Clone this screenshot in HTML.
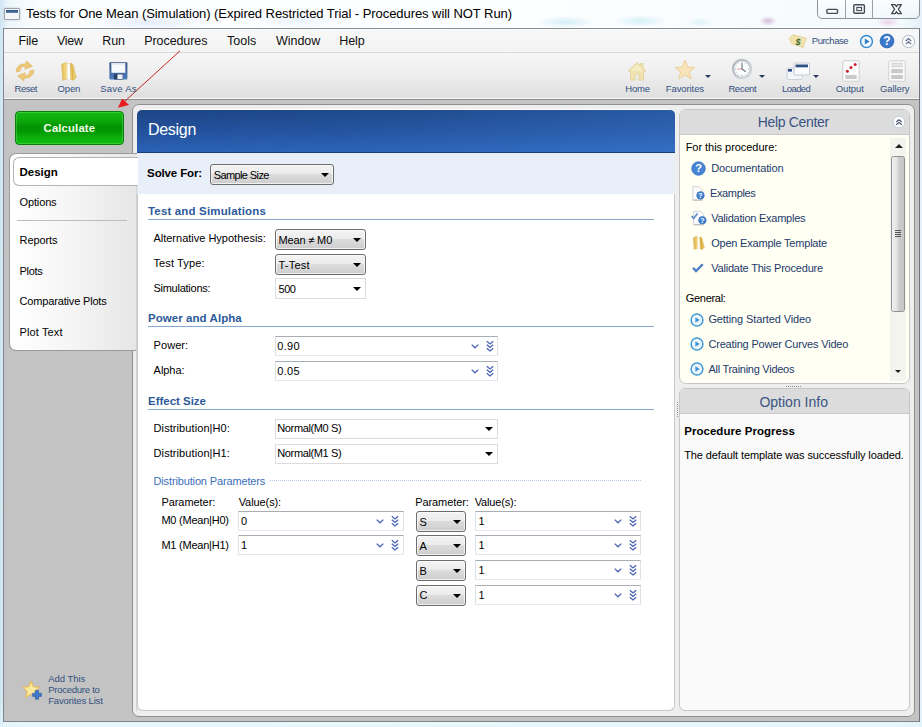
<!DOCTYPE html>
<html><head><meta charset="utf-8"><title>Tests for One Mean (Simulation)</title>
<style>
*{box-sizing:border-box;margin:0;padding:0}
html,body{width:922px;height:727px;overflow:hidden;background:#fff}
body{font-family:"Liberation Sans","DejaVu Sans",sans-serif;font-size:11px;color:#000;position:relative}
#win{position:absolute;left:0;top:0;width:922px;height:727px;overflow:hidden;
 background:
  radial-gradient(ellipse 9px 5px at 768px 21px,rgba(170,110,170,.45),rgba(255,255,255,0) 100%),
  radial-gradient(ellipse 12px 5px at 888px 22px,rgba(225,150,200,.4),rgba(255,255,255,0) 100%),
  radial-gradient(ellipse 30px 6px at 566px 22px,rgba(150,215,235,.4),rgba(255,255,255,0) 100%),
  radial-gradient(ellipse 28px 6px at 640px 21px,rgba(150,220,235,.38),rgba(255,255,255,0) 100%),
  radial-gradient(ellipse 14px 5px at 700px 22px,rgba(160,220,235,.3),rgba(255,255,255,0) 100%),
  radial-gradient(ellipse 60px 9px at 150px 22px,rgba(190,205,240,.35),rgba(255,255,255,0) 100%),
  radial-gradient(ellipse 50px 8px at 300px 20px,rgba(200,225,245,.35),rgba(255,255,255,0) 100%),
  linear-gradient(180deg,rgba(255,255,255,0) 0,rgba(255,255,255,0) 700px,rgba(225,245,250,.8) 727px),
  linear-gradient(90deg,#cfe4f2 0,#eef6fb 8px,#fbfdff 40px,#fdfeff 420px,#fbfdff 640px,#f4fafd 900px,#e4f1f8 922px);}
#win>*{position:absolute}
.t{position:absolute;white-space:nowrap}
svg{position:absolute;overflow:visible}
.bx{position:absolute}
/* combos */
.cb{position:absolute;border:1px solid #6c6c6c;border-radius:3px;background:linear-gradient(#f4f4f4 0,#ebebeb 45%,#dcdcdc 50%,#cdcdcd 100%);box-shadow:inset 0 0 0 1px rgba(255,255,255,.7)}
.fl{position:absolute;border:1px solid #dcdcdc;background:#fff}
.in{position:absolute;border:1px solid #dde1e8;border-top-color:#a9acb3;border-bottom-color:#e3e8ee;background:#fff}
.ar{position:absolute;width:0;height:0;border-left:4px solid transparent;border-right:4px solid transparent;border-top:4px solid #000}
.sec{position:absolute;height:1px;background:#85a9cf;left:148px;width:506px}
</style></head><body>
<div id="win">
<!-- client area -->
<div class="bx" style="left:3px;top:28px;width:917px;height:694px;background:#c3c3c3;border:1px solid #7d838a;border-top-color:#8a9096;border-bottom-color:#7d848a;border-right-color:#6f757c"></div>
<div class="bx" style="left:4px;top:29px;width:915px;height:23px;background:linear-gradient(#f8f8f8,#f4f4f4)"></div>
<div class="bx" style="left:4px;top:52px;width:915px;height:1px;background:#d9d9d9"></div>
<div class="bx" style="left:4px;top:53px;width:915px;height:45px;background:linear-gradient(#f6f6f6 0,#efefef 45%,#dfdfdf 100%)"></div>
<div class="bx" style="left:4px;top:98px;width:915px;height:1px;background:#fafafa"></div>
<div class="bx" style="left:4px;top:99px;width:915px;height:1px;background:#8a8a8a"></div>
<div class="bx" style="left:4px;top:100px;width:915px;height:6px;background:#c4c4c4"></div>

<!-- title icon -->
<div class="bx" style="left:4px;top:8px;width:16px;height:12px;background:#f4f6f8;border:1px solid #9aa3ad;border-radius:1px;box-shadow:0 0 2px rgba(120,140,170,.5)"></div>
<div class="bx" style="left:6px;top:10px;width:12px;height:3px;background:linear-gradient(#2d4f80,#5d86b5)"></div>
<!-- caption buttons -->
<div class="bx" style="left:817px;top:-4px;width:103px;height:23px;border:1px solid #8a929b;border-radius:0 0 5px 5px;background:linear-gradient(rgba(255,255,255,.7),rgba(240,246,250,.5))"></div>
<div class="bx" style="left:845px;top:0;width:1px;height:18px;background:#9aa2ab"></div>
<div class="bx" style="left:872px;top:0;width:1px;height:18px;background:#9aa2ab"></div>
<svg style="left:820px;top:0" width="100" height="18" viewBox="0 0 100 18">
<rect x="6.9" y="9.4" width="10.6" height="4" rx="1" fill="#fbfcfd" stroke="#464e59" stroke-width="1.4"/>
<rect x="33.8" y="4.7" width="10.6" height="8.6" rx="1" fill="#fbfcfd" stroke="#464e59" stroke-width="1.4"/>
<rect x="36.8" y="7.4" width="4.8" height="3.2" fill="#e9eef4" stroke="#464e59" stroke-width="1.1"/>
<path d="M71.6 4.6 H75.2 L76.5 6.6 L77.8 4.6 H81.4 L78.4 9.1 L81.4 13.6 H77.8 L76.5 11.6 L75.2 13.6 H71.6 L74.6 9.1 Z" fill="#fbfcfd" stroke="#414953" stroke-width="1.3" stroke-linejoin="round"/>
</svg>

<!-- red arrow -->
<svg style="left:0;top:0" width="922" height="727" viewBox="0 0 922 727"><line x1="180" y1="50.8" x2="124" y2="102" stroke="#c41a1a" stroke-width="0.95"/><polygon points="117.9,107.8 122.2,98.6 129,104.9" fill="#e81c1c"/></svg>

<!-- Calculate button -->
<div class="bx" style="left:15px;top:111px;width:109px;height:34px;border:1px solid #0c7d0c;border-radius:4px;background:linear-gradient(#16ba16 0,#0cab0c 25%,#029102 47%,#049904 60%,#0cb00c 80%,#12be12 100%);box-shadow:inset 0 0 0 1px rgba(120,240,120,.35)"></div>

<!-- big container -->
<div class="bx" style="left:131.5px;top:104px;width:783.5px;height:613px;background:#eeeeee;border:1px solid #8f8f8f;border-radius:7px"></div>
<!-- nav container -->
<div class="bx" style="left:9px;top:153px;width:128px;height:198px;background:linear-gradient(90deg,#ffffff 0,#f6f6f6 45%,#e6e6e6 100%);border:1px solid #9b9b9b;border-right:none;border-radius:7px 0 0 7px"></div>
<div class="bx" style="left:17px;top:220px;width:110px;height:1px;background:#bdbdbd"></div>
<div class="bx" style="left:136px;top:186px;width:1px;height:525px;background:#d2d2d2"></div>
<!-- main panel -->
<div class="bx" style="left:137px;top:109px;width:538px;height:602px;background:#fff;border-radius:6px 6px 6px 6px;border:1px solid #c8c8c8;border-top:none"></div>
<div class="bx" style="left:137px;top:109.5px;width:538px;height:43.5px;border-radius:5px 5px 0 0;background:linear-gradient(90deg,rgba(70,140,230,0) 0,rgba(70,140,230,.06) 40%,rgba(70,140,230,.3) 100%),linear-gradient(#1d4585 0,#224f99 45%,#2b62b6 100%);border-bottom:1px solid #1a3f7a"></div>
<div class="bx" style="left:137px;top:153px;width:538px;height:41px;background:#e9eff9"></div>
<!-- design tab -->
<div class="bx" style="left:13px;top:157px;width:125px;height:29px;background:#fff;border:1px solid #b3b3b3;border-right:none;border-radius:6px 0 0 6px"></div>

<!-- form controls -->
<div class="cb" style="left:210px;top:164px;width:124px;height:21px"></div><div class="ar" style="left:321px;top:173px"></div>
<div class="sec" style="top:219px"></div>
<div class="cb" style="left:275px;top:229px;width:91px;height:21px"></div><div class="ar" style="left:353px;top:238px"></div>
<div class="cb" style="left:275px;top:254px;width:91px;height:21px"></div><div class="ar" style="left:353px;top:263px"></div>
<div class="fl" style="left:275px;top:278px;width:91px;height:21px"></div><div class="ar" style="left:353px;top:287px"></div>
<div class="sec" style="top:326px"></div>
<div class="in" style="left:275px;top:336px;width:223px;height:20px"></div>
<div class="in" style="left:275px;top:361px;width:223px;height:20px"></div>
<div class="sec" style="top:409px"></div>
<div class="fl" style="left:275px;top:419px;width:223px;height:20px"></div><div class="ar" style="left:485px;top:427px"></div>
<div class="fl" style="left:275px;top:444px;width:223px;height:20px"></div><div class="ar" style="left:485px;top:452px"></div>
<div class="bx" style="left:270px;top:480px;width:372px;height:1px;background:repeating-linear-gradient(90deg,#b9cbe2 0,#b9cbe2 1px,transparent 1px,transparent 2px)"></div>
<div class="in" style="left:238px;top:511px;width:166px;height:20px"></div>
<div class="in" style="left:238px;top:535px;width:166px;height:20px"></div>
<svg style="left:469.7px;top:339.8px" width="26" height="13" viewBox="0 0 26 13"><path d="M1.7 4.6 L5 7.8 L8.3 4.6" fill="none" stroke="#4a63b4" stroke-width="1.3"/><path d="M16.8 1.2 L20 4 L23.2 1.2 M16.8 4.7 L20 7.5 L23.2 4.7 M16.8 8.2 L20 11 L23.2 8.2" fill="none" stroke="#4a63b4" stroke-width="1.3"/></svg>
<svg style="left:469.7px;top:364.8px" width="26" height="13" viewBox="0 0 26 13"><path d="M1.7 4.6 L5 7.8 L8.3 4.6" fill="none" stroke="#4a63b4" stroke-width="1.3"/><path d="M16.8 1.2 L20 4 L23.2 1.2 M16.8 4.7 L20 7.5 L23.2 4.7 M16.8 8.2 L20 11 L23.2 8.2" fill="none" stroke="#4a63b4" stroke-width="1.3"/></svg>
<svg style="left:375.4px;top:515px" width="26" height="13" viewBox="0 0 26 13"><path d="M1.7 4.6 L5 7.8 L8.3 4.6" fill="none" stroke="#4a63b4" stroke-width="1.3"/><path d="M16.8 1.2 L20 4 L23.2 1.2 M16.8 4.7 L20 7.5 L23.2 4.7 M16.8 8.2 L20 11 L23.2 8.2" fill="none" stroke="#4a63b4" stroke-width="1.3"/></svg>
<svg style="left:375.4px;top:539.3px" width="26" height="13" viewBox="0 0 26 13"><path d="M1.7 4.6 L5 7.8 L8.3 4.6" fill="none" stroke="#4a63b4" stroke-width="1.3"/><path d="M16.8 1.2 L20 4 L23.2 1.2 M16.8 4.7 L20 7.5 L23.2 4.7 M16.8 8.2 L20 11 L23.2 8.2" fill="none" stroke="#4a63b4" stroke-width="1.3"/></svg>
<div class="cb" style="left:416px;top:511px;width:50px;height:21px"></div><div class="ar" style="left:453px;top:520px"></div>
<div class="in" style="left:475px;top:511px;width:166px;height:20px"></div>
<svg style="left:612.5px;top:515px" width="26" height="13" viewBox="0 0 26 13"><path d="M1.7 4.6 L5 7.8 L8.3 4.6" fill="none" stroke="#4a63b4" stroke-width="1.3"/><path d="M16.8 1.2 L20 4 L23.2 1.2 M16.8 4.7 L20 7.5 L23.2 4.7 M16.8 8.2 L20 11 L23.2 8.2" fill="none" stroke="#4a63b4" stroke-width="1.3"/></svg>
<div class="cb" style="left:416px;top:535px;width:50px;height:21px"></div><div class="ar" style="left:453px;top:544px"></div>
<div class="in" style="left:475px;top:535px;width:166px;height:20px"></div>
<svg style="left:612.5px;top:539px" width="26" height="13" viewBox="0 0 26 13"><path d="M1.7 4.6 L5 7.8 L8.3 4.6" fill="none" stroke="#4a63b4" stroke-width="1.3"/><path d="M16.8 1.2 L20 4 L23.2 1.2 M16.8 4.7 L20 7.5 L23.2 4.7 M16.8 8.2 L20 11 L23.2 8.2" fill="none" stroke="#4a63b4" stroke-width="1.3"/></svg>
<div class="cb" style="left:416px;top:560px;width:50px;height:21px"></div><div class="ar" style="left:453px;top:569px"></div>
<div class="in" style="left:475px;top:560px;width:166px;height:20px"></div>
<svg style="left:612.5px;top:564px" width="26" height="13" viewBox="0 0 26 13"><path d="M1.7 4.6 L5 7.8 L8.3 4.6" fill="none" stroke="#4a63b4" stroke-width="1.3"/><path d="M16.8 1.2 L20 4 L23.2 1.2 M16.8 4.7 L20 7.5 L23.2 4.7 M16.8 8.2 L20 11 L23.2 8.2" fill="none" stroke="#4a63b4" stroke-width="1.3"/></svg>
<div class="cb" style="left:416px;top:585px;width:50px;height:21px"></div><div class="ar" style="left:453px;top:594px"></div>
<div class="in" style="left:475px;top:585px;width:166px;height:20px"></div>
<svg style="left:612.5px;top:589px" width="26" height="13" viewBox="0 0 26 13"><path d="M1.7 4.6 L5 7.8 L8.3 4.6" fill="none" stroke="#4a63b4" stroke-width="1.3"/><path d="M16.8 1.2 L20 4 L23.2 1.2 M16.8 4.7 L20 7.5 L23.2 4.7 M16.8 8.2 L20 11 L23.2 8.2" fill="none" stroke="#4a63b4" stroke-width="1.3"/></svg>

<!-- help center panel -->
<div class="bx" style="left:679px;top:109px;width:231px;height:275px;background:#fffff4;border:1px solid #c6c6c6;border-radius:7px"></div>
<div class="bx" style="left:680px;top:110px;width:229px;height:25px;background:#dcdcdc;border-radius:6px 6px 0 0;border-bottom:1px solid #c9c9c9"></div>
<!-- scrollbar -->
<div class="bx" style="left:890px;top:138px;width:16px;height:243px;background:#f4f4ef"></div>
<div class="bx" style="left:890.5px;top:156px;width:14.5px;height:156px;border:1px solid #919191;border-radius:2.5px;background:linear-gradient(90deg,#f2f2f2 0,#e2e2e2 40%,#cbcbcb 60%,#c6c6c6 100%)"></div>
<div class="bx" style="left:895px;top:230px;width:6px;height:1px;background:#555;box-shadow:0 2px 0 #555,0 4px 0 #555,0 6px 0 #555"></div>
<div class="bx" style="left:894.5px;top:144px;width:0;height:0;border-left:4px solid transparent;border-right:4px solid transparent;border-bottom:4px solid #222"></div>
<div class="bx" style="left:894.5px;top:370px;width:0;height:0;border-left:3.5px solid transparent;border-right:3.5px solid transparent;border-top:3.5px solid #222"></div>
<!-- splitter dots -->
<div class="bx" style="left:786px;top:386px;width:16px;height:1px;background:repeating-linear-gradient(90deg,#8c8c8c 0,#8c8c8c 1px,transparent 1px,transparent 2px)"></div>
<div class="bx" style="left:677px;top:402px;width:1px;height:16px;background:repeating-linear-gradient(#8c8c8c 0,#8c8c8c 1px,transparent 1px,transparent 2px)"></div>
<!-- option info panel -->
<div class="bx" style="left:679px;top:388px;width:231px;height:323px;background:#fafafa;border:1px solid #c6c6c6;border-radius:6px"></div>
<div class="bx" style="left:680px;top:389px;width:229px;height:25px;background:#dcdcdc;border-radius:5px 5px 0 0;border-bottom:1px solid #c9c9c9"></div>

<!-- toolbar icons -->
<!-- Reset -->
<svg style="left:15px;top:60px" width="20" height="22" viewBox="0 0 20 22">
<g transform="rotate(-20 10 11)">
<path d="M1.6 9 C2.6 3.8 9 2.2 13 4.8 L14.6 2 L18.6 9 L10.4 9.2 L12 6.8 C9.5 5.4 6.4 6.2 5.4 9.4 Z" fill="#ecc878" stroke="#dfb45e" stroke-width=".6"/>
<path d="M18.4 13 C17.4 18.2 11 19.8 7 17.2 L5.4 20 L1.4 13 L9.6 12.8 L8 15.2 C10.5 16.6 13.6 15.8 14.6 12.6 Z" fill="#ecc878" stroke="#dfb45e" stroke-width=".6"/>
</g>
</svg>
<!-- Open -->
<svg style="left:61px;top:62px" width="16" height="19" viewBox="0 0 16 19">
<defs><linearGradient id="fo1" x1="0" y1="0" x2="1" y2="0"><stop offset="0" stop-color="#e6bc50"/><stop offset="1" stop-color="#f6e29a"/></linearGradient></defs>
<path d="M.6 2.4 L4.6 .6 L6.6 1.6 L6.6 16.6 L1.8 18.4 Z" fill="url(#fo1)" stroke="#d6ae48" stroke-width=".5"/>
<path d="M6.2 2.2 L9.4 1.2 L9.8 17.2 L6.2 17.6 Z" fill="#fdfdfb" stroke="#dcdcd4" stroke-width=".4"/>
<path d="M9.2 1.4 C12.4 1 13 4.4 13.2 7.4 L15.2 15.6 L12.2 18.2 L9.8 17.4 Z" fill="#eccc6a" stroke="#d6ae48" stroke-width=".5"/>
<path d="M12.2 18.2 L11.2 8 C11.1 5 10.6 2.8 9.4 1.6" fill="none" stroke="#caa03c" stroke-width=".7"/>
</svg>
<!-- Save As -->
<svg style="left:108.5px;top:62px" width="19" height="18" viewBox="0 0 19 18">
<defs><linearGradient id="sv1" x1="0" y1="0" x2="0" y2="1"><stop offset="0" stop-color="#34527f"/><stop offset="1" stop-color="#4c7cbc"/></linearGradient></defs>
<path d="M.4 1.2 Q.4 .3 1.3 .3 H17.5 Q18.4 .3 18.4 1.2 V16.6 Q18.4 17.5 17.5 17.5 H1.3 Q.4 17.5 .4 16.6 Z" fill="url(#sv1)"/>
<rect x="2.4" y="1.2" width="13.9" height="9.6" fill="#f7f8fb"/>
<rect x="2.4" y="1.2" width="13.9" height="1.6" fill="#e4e8ef"/>
<rect x="5.1" y="11.8" width="8.8" height="5.7" fill="#273c66"/>
<rect x="8.4" y="12.4" width="5.2" height="4.6" fill="#eef0f2"/>
</svg>
<!-- Home -->
<svg style="left:627px;top:61px" width="20" height="20" viewBox="0 0 20 20">
<path d="M10 1.5 L1 10 L3.5 10 L3.5 19 L8 19 L8 13 L12 13 L12 19 L16.5 19 L16.5 10 L19 10 L16 7.2 L16 2.5 L13.5 2.5 L13.5 4.8 Z" fill="#f0e3b0" stroke="#e2cf94" stroke-width=".8" stroke-linejoin="round"/>
<path d="M10 3.5 L4.5 8.8 L4.5 10 L15.5 10 L15.5 8.8 Z" fill="#f5ecc6"/>
</svg>
<!-- Favorites -->
<svg style="left:674px;top:59px" width="22" height="21" viewBox="0 0 22 21">
<path d="M11 1 L13.8 8 L21 8.4 L15.4 13 L17.3 20 L11 16 L4.7 20 L6.6 13 L1 8.4 L8.2 8 Z" fill="#f7e4ba" stroke="#ebcd94" stroke-width=".9" stroke-linejoin="round"/>
</svg>
<div class="bx" style="left:705px;top:75px;width:0;height:0;border-left:3px solid transparent;border-right:3px solid transparent;border-top:3px solid #2a3a5c"></div>
<!-- Recent -->
<svg style="left:731px;top:58px" width="22" height="22" viewBox="0 0 22 22">
<defs><linearGradient id="ck1" x1="0" y1="0" x2="1" y2="1"><stop offset="0" stop-color="#a9afb9"/><stop offset="1" stop-color="#d9dde2"/></linearGradient></defs>
<circle cx="11" cy="11" r="10.2" fill="url(#ck1)"/>
<circle cx="11" cy="11" r="7.9" fill="#fcfdfe" stroke="#c3c8d0" stroke-width=".5"/>
<g fill="#9aa0aa"><circle cx="11" cy="4.6" r=".55"/><circle cx="11" cy="17.4" r=".55"/><circle cx="4.6" cy="11" r=".55"/><circle cx="17.4" cy="11" r=".55"/><circle cx="14.2" cy="5.5" r=".45"/><circle cx="16.5" cy="7.8" r=".45"/><circle cx="16.5" cy="14.2" r=".45"/><circle cx="14.2" cy="16.5" r=".45"/><circle cx="7.8" cy="16.5" r=".45"/><circle cx="5.5" cy="14.2" r=".45"/><circle cx="5.5" cy="7.8" r=".45"/><circle cx="7.8" cy="5.5" r=".45"/></g>
<path d="M11 5.2 V11 L14.8 13.8" fill="none" stroke="#6a727c" stroke-width="1.1"/>
<path d="M11 11 H6" fill="none" stroke="#d86a6a" stroke-width=".7"/>
</svg>
<div class="bx" style="left:759px;top:75px;width:0;height:0;border-left:3px solid transparent;border-right:3px solid transparent;border-top:3px solid #2a3a5c"></div>
<!-- Loaded -->
<svg style="left:786px;top:62px" width="25" height="19" viewBox="0 0 25 19">
<rect x="1" y="6" width="15" height="11.5" rx="1" fill="#f4f6f9" stroke="#c2c8d0" stroke-width=".8"/>
<rect x="2" y="7" width="4" height="2.6" fill="#2c4f86"/>
<rect x="8" y="1" width="15.5" height="12" rx="1" fill="#fafbfd" stroke="#b9c0ca" stroke-width=".8"/>
<rect x="9.5" y="2.5" width="12.5" height="2.8" fill="#2c4f86"/>
</svg>
<div class="bx" style="left:813px;top:75px;width:0;height:0;border-left:3px solid transparent;border-right:3px solid transparent;border-top:3px solid #2a3a5c"></div>
<!-- Output -->
<svg style="left:842px;top:60px" width="18" height="22" viewBox="0 0 18 22">
<rect x=".8" y=".8" width="16.4" height="20.4" rx="1" fill="#fbfbfb" stroke="#cfcfcf" stroke-width="1"/>
<circle cx="5.4" cy="11.2" r="1.5" fill="#cc2030"/><circle cx="9" cy="7.6" r="1.5" fill="#cc2030"/><circle cx="13.2" cy="4.6" r="1.5" fill="#cc2030"/>
<rect x="3.4" y="15" width="11.2" height="4" fill="#c9c9c9"/>
</svg>
<!-- Gallery -->
<svg style="left:887.5px;top:60px" width="18" height="22" viewBox="0 0 18 22">
<rect x=".8" y=".8" width="16.4" height="20.4" rx="1" fill="#fbfbfb" stroke="#cfcfcf" stroke-width="1"/>
<rect x="3.2" y="2.8" width="11.6" height="1" fill="#cdcdcd"/><rect x="3.2" y="4.5" width="11.6" height="1" fill="#cdcdcd"/><rect x="3.2" y="6.2" width="11.6" height="1" fill="#cdcdcd"/>
<rect x="3.2" y="9" width="11.6" height="4.2" fill="#c9c9c9"/>
<rect x="3.2" y="15" width="11.6" height="4" fill="#c9c9c9"/>
</svg>
<!-- Purchase tag -->
<svg style="left:788px;top:33px" width="20" height="16" viewBox="0 0 20 16">
<path d="M1.2 5.5 L5 1.6 L18.4 5.4 L15.2 14.6 L3.4 10.6 Z" fill="#f2e3ae" stroke="#e2d094" stroke-width=".8" stroke-linejoin="round"/>
<text x="7.6" y="11.6" font-family="Liberation Sans, sans-serif" font-size="9" font-weight="700" font-style="italic" fill="#3a6a2a">$</text>
</svg>
<!-- play -->
<svg style="left:859px;top:34px" width="15" height="15" viewBox="0 0 15 15">
<circle cx="7.5" cy="7.5" r="5.9" fill="#f4f9fd" stroke="#3a8ad0" stroke-width="1.5"/><path d="M5.8 4.4 L10.6 7.5 L5.8 10.6 Z" fill="#2f7fca"/>
</svg>
<!-- help -->
<svg style="left:879px;top:33px" width="16" height="16" viewBox="0 0 16 16">
<circle cx="8" cy="8" r="6.9" fill="#3a78cc" stroke="#2a5faf" stroke-width=".8"/>
<text x="8" y="12.2" text-anchor="middle" font-family="Liberation Sans, sans-serif" font-size="12" font-weight="700" fill="#fff">?</text>
</svg>
<!-- collapse -->
<svg style="left:901px;top:34px" width="15" height="15" viewBox="0 0 15 15">
<circle cx="7.5" cy="7.5" r="6.2" fill="#fafbfc" stroke="#b4bcc6" stroke-width="1"/>
<path d="M4.8 7 L7.5 4.6 L10.2 7 M4.8 10.2 L7.5 7.8 L10.2 10.2" fill="none" stroke="#5a6a88" stroke-width="1.1"/>
</svg>
<!-- help center collapse -->
<svg style="left:892.3px;top:115.3px" width="14" height="14" viewBox="0 0 14 14">
<circle cx="7" cy="7" r="5.9" fill="#fcfdfe" stroke="#c3ccd8" stroke-width="1"/>
<path d="M4.2 7 L7 4.8 L9.8 7 M4.2 9.7 L7 7.5 L9.8 9.7" fill="none" stroke="#4c586c" stroke-width="1.15"/>
</svg>
<!-- help list icons -->
<svg style="left:691px;top:161px" width="15" height="15" viewBox="0 0 15 15">
<circle cx="7.5" cy="7.5" r="6.8" fill="#4685d6" stroke="#2f68b8" stroke-width=".7"/>
<text x="7.5" y="11.4" text-anchor="middle" font-family="Liberation Sans, sans-serif" font-size="11" font-weight="700" fill="#fff">?</text>
</svg>
<svg style="left:691px;top:185px" width="16" height="17" viewBox="0 0 16 17">
<path d="M1.8 1.6 H8.4 L11.2 4.4 V15 H1.8 Z" fill="#fbfbfb" stroke="#c9c9c9" stroke-width=".8"/>
<path d="M1.8 15.2 H11.2" stroke="#b0b0b0" stroke-width=".8"/>
<circle cx="9.5" cy="10.4" r="3.8" fill="#3f7fd0" stroke="#2c62b0" stroke-width=".5"/>
<text x="9.5" y="13" text-anchor="middle" font-family="Liberation Sans, sans-serif" font-size="7" font-weight="700" fill="#fff">?</text>
</svg>
<svg style="left:691px;top:210px" width="18" height="17" viewBox="0 0 18 17">
<path d="M2.6 1.4 H9.6 L12.6 4.4 V14.6 H2.6 Z" fill="#fbfbfb" stroke="#c9c9c9" stroke-width=".8"/>
<path d="M2.6 14.8 H12.6" stroke="#b0b0b0" stroke-width=".8"/>
<path d="M.6 6 L2.6 8.4 L6.4 3.6" fill="none" stroke="#5a86c8" stroke-width="1.6"/>
<circle cx="11.4" cy="10.2" r="3.8" fill="#3f7fd0" stroke="#2c62b0" stroke-width=".5"/>
<text x="11.4" y="12.8" text-anchor="middle" font-family="Liberation Sans, sans-serif" font-size="7" font-weight="700" fill="#fff">?</text>
</svg>
<svg style="left:692.5px;top:236px" width="12" height="14" viewBox="0 0 12 14">
<defs><linearGradient id="fo2" x1="0" y1="0" x2="1" y2="0"><stop offset="0" stop-color="#dcae40"/><stop offset="1" stop-color="#f4dc8c"/></linearGradient></defs>
<path d="M.4 1.6 L3.4 .4 L4.8 1.2 L4.8 12.2 L1.2 13.4 Z" fill="url(#fo2)" stroke="#cfa43c" stroke-width=".4"/>
<path d="M4.6 1.6 L6.8 1 L7.2 12.6 L4.6 12.8 Z" fill="#fdfdfb"/>
<path d="M6.8 1 C9 .8 9.6 3.4 9.8 5.6 L11.4 11.6 L9 13.4 L7.2 12.8 Z" fill="#e8c45c" stroke="#cfa43c" stroke-width=".4"/>
<path d="M9 13.4 L8.2 6 C8.1 3.8 7.8 2 7 1.2" fill="none" stroke="#c4982c" stroke-width=".6"/>
</svg>
<svg style="left:692px;top:263px" width="12" height="10" viewBox="0 0 12 10">
<path d="M1 4.8 L4 8 L10.8 1.2" fill="none" stroke="#4a7cc4" stroke-width="2.3"/>
</svg>
<svg style="left:690.3px;top:312.6px" width="14" height="14" viewBox="0 0 14 14"><circle cx="7" cy="7" r="5.9" fill="#eef7fc" stroke="#4499d6" stroke-width="1.5"/><path d="M5.4 4.2 L9.8 7 L5.4 9.8 Z" fill="#3e94d4"/></svg>
<svg style="left:690.3px;top:337.2px" width="14" height="14" viewBox="0 0 14 14"><circle cx="7" cy="7" r="5.9" fill="#eef7fc" stroke="#4499d6" stroke-width="1.5"/><path d="M5.4 4.2 L9.8 7 L5.4 9.8 Z" fill="#3e94d4"/></svg>
<svg style="left:690.3px;top:362.3px" width="14" height="14" viewBox="0 0 14 14"><circle cx="7" cy="7" r="5.9" fill="#eef7fc" stroke="#4499d6" stroke-width="1.5"/><path d="M5.4 4.2 L9.8 7 L5.4 9.8 Z" fill="#3e94d4"/></svg>
<!-- add favorites star -->
<svg style="left:22px;top:680px" width="21" height="21" viewBox="0 0 21 21">
<path d="M9 1 L11.4 6.8 L17.6 7.2 L12.8 11.2 L14.4 17.4 L9 14 L3.6 17.4 L5.2 11.2 L.6 7.2 L6.6 6.8 Z" fill="#fbe9a0" stroke="#e4b84c" stroke-width="1" stroke-linejoin="round"/>
<path d="M13.4 10.4 h3.2 v-0 v2.8 h2.8 v3.2 h-2.8 v2.8 h-3.2 v-2.8 h-2.8 v-3.2 h2.8 Z" fill="#3f78c8" stroke="#2c5aa4" stroke-width=".6"/>
</svg>

<div class="t" style="left:26.0px;top:4.6px;font-size:13px;line-height:17px;letter-spacing:-0.06px;">Tests for One Mean (Simulation) (Expired Restricted Trial - Procedures will NOT Run)</div>
<div class="t" style="left:18.5px;top:33.2px;font-size:12.5px;line-height:16px;color:#111;letter-spacing:-0.16px;">File</div>
<div class="t" style="left:56.9px;top:33.2px;font-size:12.5px;line-height:16px;color:#111;letter-spacing:-0.22px;">View</div>
<div class="t" style="left:102.2px;top:33.2px;font-size:12.5px;line-height:16px;color:#111;letter-spacing:-0.08px;">Run</div>
<div class="t" style="left:144.3px;top:33.2px;font-size:12.5px;line-height:16px;color:#111;letter-spacing:-0.09px;">Procedures</div>
<div class="t" style="left:227.0px;top:33.2px;font-size:12.5px;line-height:16px;color:#111;letter-spacing:0.04px;">Tools</div>
<div class="t" style="left:276.0px;top:33.2px;font-size:12.5px;line-height:16px;color:#111;letter-spacing:-0.03px;">Window</div>
<div class="t" style="left:339.2px;top:33.2px;font-size:12.5px;line-height:16px;color:#111;letter-spacing:-0.03px;">Help</div>
<div class="t" style="left:14.5px;top:82.6px;font-size:9.5px;line-height:12px;color:#33507f;letter-spacing:-0.47px;">Reset</div>
<div class="t" style="left:57.4px;top:82.6px;font-size:9.5px;line-height:12px;color:#33507f;letter-spacing:-0.09px;">Open</div>
<div class="t" style="left:100.3px;top:82.6px;font-size:9.5px;line-height:12px;color:#33507f;letter-spacing:0.22px;">Save As</div>
<div class="t" style="left:625.2px;top:82.6px;font-size:9.5px;line-height:12px;color:#33507f;letter-spacing:-0.14px;">Home</div>
<div class="t" style="left:665.8px;top:82.6px;font-size:9.5px;line-height:12px;color:#33507f;letter-spacing:-0.10px;">Favorites</div>
<div class="t" style="left:728.4px;top:82.6px;font-size:9.5px;line-height:12px;color:#33507f;letter-spacing:-0.38px;">Recent</div>
<div class="t" style="left:782.0px;top:82.6px;font-size:9.5px;line-height:12px;color:#33507f;letter-spacing:-0.57px;">Loaded</div>
<div class="t" style="left:835.7px;top:82.6px;font-size:9.5px;line-height:12px;color:#33507f;letter-spacing:-0.07px;">Output</div>
<div class="t" style="left:880.0px;top:82.6px;font-size:9.5px;line-height:12px;color:#33507f;letter-spacing:-0.08px;">Gallery</div>
<div class="t" style="left:811.8px;top:34.8px;font-size:9.5px;line-height:12px;color:#33507f;letter-spacing:-0.49px;">Purchase</div>
<div class="t" style="left:43.6px;top:120.5px;font-size:11.3px;line-height:15px;font-weight:700;color:#f0ffe6;letter-spacing:0.15px;">Calculate</div>
<div class="t" style="left:19.6px;top:164.5px;font-size:11.5px;line-height:15px;font-weight:700;letter-spacing:-0.04px;">Design</div>
<div class="t" style="left:19.6px;top:195.0px;font-size:11px;line-height:14px;letter-spacing:-0.15px;">Options</div>
<div class="t" style="left:19.6px;top:233.3px;font-size:11px;line-height:14px;letter-spacing:-0.10px;">Reports</div>
<div class="t" style="left:19.6px;top:264.0px;font-size:11px;line-height:14px;letter-spacing:-0.33px;">Plots</div>
<div class="t" style="left:19.6px;top:294.0px;font-size:11px;line-height:14px;letter-spacing:-0.17px;">Comparative Plots</div>
<div class="t" style="left:19.6px;top:325.0px;font-size:11px;line-height:14px;letter-spacing:0.11px;">Plot Text</div>
<div class="t" style="left:48.2px;top:672.9px;font-size:9.5px;line-height:12px;color:#33507f;letter-spacing:-0.03px;">Add This</div>
<div class="t" style="left:48.2px;top:684.0px;font-size:9.5px;line-height:12px;color:#33507f;letter-spacing:-0.25px;">Procedure to</div>
<div class="t" style="left:48.2px;top:694.7px;font-size:9.5px;line-height:12px;color:#33507f;letter-spacing:-0.14px;">Favorites List</div>
<div class="t" style="left:148.0px;top:119.0px;font-size:16px;line-height:21px;color:#fff;letter-spacing:-0.30px;">Design</div>
<div class="t" style="left:147.1px;top:165.5px;font-size:11.5px;line-height:15px;font-weight:700;letter-spacing:-0.13px;">Solve For:</div>
<div class="t" style="left:213.7px;top:168.0px;font-size:11px;line-height:14px;letter-spacing:-0.60px;">Sample Size</div>
<div class="t" style="left:148.0px;top:203.5px;font-size:11.5px;line-height:15px;font-weight:700;color:#2c5a9a;letter-spacing:0.16px;">Test and Simulations</div>
<div class="t" style="left:153.4px;top:231.3px;font-size:11px;line-height:14px;">Alternative Hypothesis:</div>
<div class="t" style="left:278.5px;top:233.0px;font-size:11px;line-height:14px;letter-spacing:-0.15px;">Mean ≠ M0</div>
<div class="t" style="left:153.4px;top:256.0px;font-size:11px;line-height:14px;letter-spacing:0.13px;">Test Type:</div>
<div class="t" style="left:278.5px;top:258.0px;font-size:11px;line-height:14px;letter-spacing:0.21px;">T-Test</div>
<div class="t" style="left:153.4px;top:281.3px;font-size:11px;line-height:14px;letter-spacing:-0.25px;">Simulations:</div>
<div class="t" style="left:278.5px;top:281.5px;font-size:11px;line-height:14px;letter-spacing:-0.49px;">500</div>
<div class="t" style="left:148.0px;top:311.1px;font-size:11.5px;line-height:15px;font-weight:700;color:#2c5a9a;letter-spacing:0.06px;">Power and Alpha</div>
<div class="t" style="left:153.6px;top:338.3px;font-size:11px;line-height:14px;letter-spacing:0.06px;">Power:</div>
<div class="t" style="left:277.3px;top:339.0px;font-size:11px;line-height:14px;letter-spacing:0.32px;">0.90</div>
<div class="t" style="left:153.6px;top:363.0px;font-size:11px;line-height:14px;letter-spacing:-0.05px;">Alpha:</div>
<div class="t" style="left:277.3px;top:364.0px;font-size:11px;line-height:14px;letter-spacing:0.32px;">0.05</div>
<div class="t" style="left:148.0px;top:393.5px;font-size:11.5px;line-height:15px;font-weight:700;color:#2c5a9a;letter-spacing:-0.02px;">Effect Size</div>
<div class="t" style="left:153.6px;top:420.7px;font-size:11px;line-height:14px;letter-spacing:0.08px;">Distribution|H0:</div>
<div class="t" style="left:277.3px;top:420.7px;font-size:11px;line-height:14px;letter-spacing:-0.38px;">Normal(M0 S)</div>
<div class="t" style="left:153.6px;top:446.2px;font-size:11px;line-height:14px;letter-spacing:0.08px;">Distribution|H1:</div>
<div class="t" style="left:277.3px;top:446.2px;font-size:11px;line-height:14px;letter-spacing:-0.38px;">Normal(M1 S)</div>
<div class="t" style="left:153.5px;top:474.0px;font-size:11px;line-height:14px;color:#3b6fb8;letter-spacing:-0.14px;">Distribution Parameters</div>
<div class="t" style="left:161.4px;top:494.6px;font-size:11px;line-height:14px;letter-spacing:-0.05px;">Parameter:</div>
<div class="t" style="left:238.7px;top:494.6px;font-size:11px;line-height:14px;letter-spacing:-0.09px;">Value(s):</div>
<div class="t" style="left:161.4px;top:513.0px;font-size:11px;line-height:14px;letter-spacing:-0.23px;">M0 (Mean|H0)</div>
<div class="t" style="left:241.0px;top:514.0px;font-size:11px;line-height:14px;">0</div>
<div class="t" style="left:161.4px;top:538.0px;font-size:11px;line-height:14px;letter-spacing:-0.23px;">M1 (Mean|H1)</div>
<div class="t" style="left:241.0px;top:538.4px;font-size:11px;line-height:14px;">1</div>
<div class="t" style="left:415.2px;top:494.6px;font-size:11px;line-height:14px;letter-spacing:-0.08px;">Parameter:</div>
<div class="t" style="left:474.7px;top:494.6px;font-size:11px;line-height:14px;letter-spacing:-0.16px;">Value(s):</div>
<div class="t" style="left:419.6px;top:514.5px;font-size:11px;line-height:14px;">S</div>
<div class="t" style="left:478.6px;top:514.2px;font-size:11px;line-height:14px;">1</div>
<div class="t" style="left:419.6px;top:538.6px;font-size:11px;line-height:14px;">A</div>
<div class="t" style="left:478.6px;top:538.3px;font-size:11px;line-height:14px;">1</div>
<div class="t" style="left:419.6px;top:563.6px;font-size:11px;line-height:14px;">B</div>
<div class="t" style="left:478.6px;top:563.3px;font-size:11px;line-height:14px;">1</div>
<div class="t" style="left:419.6px;top:588.3px;font-size:11px;line-height:14px;">C</div>
<div class="t" style="left:478.6px;top:588.0px;font-size:11px;line-height:14px;">1</div>
<div class="t" style="left:757.8px;top:113.2px;font-size:14px;line-height:18px;color:#3a5484;letter-spacing:-0.34px;">Help Center</div>
<div class="t" style="left:685.7px;top:139.6px;font-size:11px;line-height:14px;letter-spacing:-0.04px;">For this procedure:</div>
<div class="t" style="left:711.2px;top:161.0px;font-size:11px;line-height:14px;color:#233a6a;letter-spacing:-0.14px;">Documentation</div>
<div class="t" style="left:710.0px;top:185.8px;font-size:11px;line-height:14px;color:#233a6a;letter-spacing:-0.36px;">Examples</div>
<div class="t" style="left:711.2px;top:211.4px;font-size:11px;line-height:14px;color:#233a6a;letter-spacing:-0.25px;">Validation Examples</div>
<div class="t" style="left:711.2px;top:236.1px;font-size:11px;line-height:14px;color:#233a6a;letter-spacing:-0.21px;">Open Example Template</div>
<div class="t" style="left:711.2px;top:260.9px;font-size:11px;line-height:14px;color:#233a6a;letter-spacing:-0.20px;">Validate This Procedure</div>
<div class="t" style="left:685.7px;top:291.0px;font-size:11px;line-height:14px;letter-spacing:-0.28px;">General:</div>
<div class="t" style="left:708.4px;top:311.6px;font-size:11px;line-height:14px;color:#233a6a;letter-spacing:-0.11px;">Getting Started Video</div>
<div class="t" style="left:708.4px;top:336.7px;font-size:11px;line-height:14px;color:#233a6a;letter-spacing:-0.18px;">Creating Power Curves Video</div>
<div class="t" style="left:708.4px;top:362.0px;font-size:11px;line-height:14px;color:#233a6a;letter-spacing:-0.27px;">All Training Videos</div>
<div class="t" style="left:759.4px;top:393.4px;font-size:14px;line-height:18px;color:#3a5484;letter-spacing:0.01px;">Option Info</div>
<div class="t" style="left:684.2px;top:423.5px;font-size:11.5px;line-height:15px;font-weight:700;letter-spacing:0.04px;">Procedure Progress</div>
<div class="t" style="left:684.2px;top:448.1px;font-size:11px;line-height:14px;letter-spacing:-0.11px;">The default template was successfully loaded.</div>
</div>
</body></html>
